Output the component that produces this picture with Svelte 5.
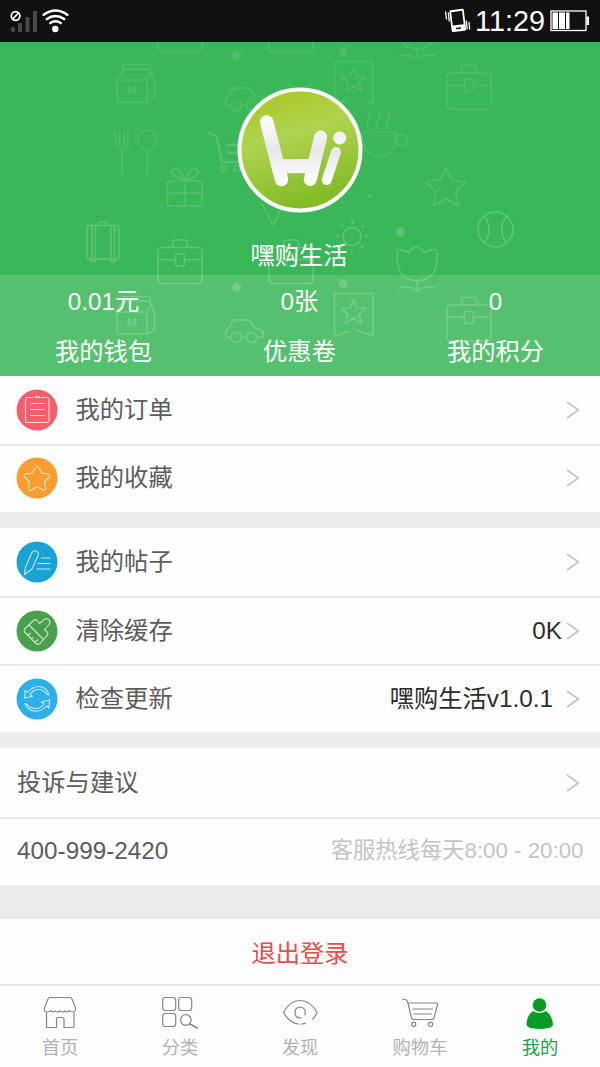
<script>
    const stats = [
        { value: '0.01元', label: '我的钱包' },
        { value: '0张', label: '优惠卷' },
        { value: '0', label: '我的积分' }
    ];

    const groups = [
        [
            { icon: 'order', label: '我的订单', color: '#f3606b' },
            { icon: 'star', label: '我的收藏', color: '#fb9d2f' }
        ],
        [
            { icon: 'post', label: '我的帖子', color: '#17a3d3' },
            { icon: 'brush', label: '清除缓存', color: '#4a9f4d', value: '0K', tight: true },
            { icon: 'refresh', label: '检查更新', color: '#2db0e9', value: '嘿购生活v1.0.1' }
        ]
    ];

    const tabs = [
        { icon: 'home', label: '首页' },
        { icon: 'category', label: '分类' },
        { icon: 'discover', label: '发现' },
        { icon: 'cart', label: '购物车' },
        { icon: 'me', label: '我的' }
    ];

    let activeTab = $state('me');
</script>

{#snippet arrow()}
    <svg class="arrow" viewBox="0 0 14 18" width="14" height="18">
        <path d="M1 1 L12.4 9 L1 17" />
    </svg>
{/snippet}

<div class="page">
    <div class="status-bar">
        <svg width="60" height="26" viewBox="10 8 60 26">
            <g fill="#4a4a4a">
                <rect x="11" y="27" width="4" height="5" rx="1.5" />
                <rect x="18" y="23" width="4" height="9" rx="1" />
                <rect x="25.500" y="17" width="4" height="15" rx="1" />
                <rect x="33" y="11" width="4" height="21" rx="1" />
            </g>
            <g fill="none" stroke="#fff" stroke-width="1.700">
                <circle cx="15.600" cy="16" r="4.300" />
                <path d="M12.600 19 L18.600 13" />
            </g>
            <g fill="none" stroke="#fff" stroke-width="2.500" stroke-linecap="round">
                <path d="M43.700 14.700 Q55.500 6.200 67.300 14.700" />
                <path d="M46.800 19.100 Q55.500 12.900 64.200 19.100" />
                <path d="M50.300 23 Q55.500 19.700 60.700 23" />
            </g>
            <circle cx="55.300" cy="29" r="3.200" fill="#fff" />
        </svg>
        <div class="status-right">
            <svg width="28" height="26" viewBox="441 8 28 26">
                <g transform="rotate(-7 455.500 20.500)">
                    <path
                        fill="#fff"
                        fill-rule="evenodd"
                        d="M450 9.500 h11.500 q1.500 0 1.500 1.500 v19 q0 1.500 -1.500 1.500 h-11.500 q-1.500 0 -1.500 -1.500 v-19 q0 -1.500 1.500 -1.500z M450.200 11.500 v13.500 h11 v-13.500z M453 27.500 v1.500 h5 v-1.500z"
                    />
                </g>
                <g stroke="#fff" stroke-width="1.300">
                    <path d="M443.500 11.500 l1 8 M446.300 12.500 l1 9 M464.300 20.500 l.9 9 M467 22 l.7 7.500" />
                </g>
            </svg>
            <span class="time">11:29</span>
            <svg width="40" height="24" viewBox="550 9 40 24">
                <rect x="551" y="11" width="35" height="19.500" fill="none" stroke="#fff" stroke-width="1.300" />
                <rect x="586.500" y="16.500" width="2.500" height="8.500" fill="#fff" />
                <path fill="#fff" d="M552.500 12.500h5.500v16.500h-5.500z M559 12.500h6v16.500h-6z M566 12.500h3.500v16.500h-3.500z" />
            </svg>
        </div>
    </div>

    <div class="header">
        <svg class="pattern" viewBox="0 42 600 333.500" width="600" height="333.500">
            <defs>
                <g id="briefcase">
                    <rect x="1" y="8.500" width="44" height="36" rx="3.500" />
                    <path d="M15.500 8.500 V4 q0-3 3-3 h9 q3 0 3 3 v4.500 M1 20.500 H18.500 M27.500 20.500 H45" />
                    <rect x="18.500" y="15" width="9" height="12" rx="1.500" />
                </g>
                <g id="upper-row">
                    <path d="M116.500 80 L123 69 H150 L154.500 81 V98 L147 102 H117.500 Z M116.500 80 H147 V102 M147 80 L151 72 M123 69 V64.500 H150 V69" />
                    <text x="132" y="95" class="milk">M</text>
                    <path d="M230 105 H226 Q225 96 229 96 L233 88 H249 L255 96 L262 98 Q264 99 263 105 H258 M241 105 H245" />
                    <circle cx="236" cy="105.500" r="5.200" />
                    <circle cx="251.500" cy="105.500" r="5.200" />
                    <path d="M350 99 L334.500 104 V61.500 H373 V104 L356 98" />
                    <path d="M353.500 67.500 L357 76 L366 76.500 L359 82 L361.500 91 L353.500 86 L345.500 91 L348 82 L341 76.500 L350 76 Z" />
                    <use href="#briefcase" x="446" y="64.500" />
                </g>
                <g id="lower-row">
                    <use href="#briefcase" x="157" y="239" />
                    <use href="#briefcase" x="268" y="239" />
                    <path d="M397.500 250.500 Q405 249 409 253 Q416 240 424 253 Q430 248 436.500 250.500 Q440 280 417 281 Q394 280 397.500 250.500 Z M417 281 V291 M398 288 Q409 285 417 291 Q425 285 436 288" />
                    <circle cx="236.500" cy="287" r="4.500" class="dot" />
                    <circle cx="343" cy="283.500" r="4.200" class="dot" />
                </g>
            </defs>
            <g opacity=".1">
                <use href="#lower-row" y="-232" />
                <use href="#upper-row" />
                <!-- coffee -->
                <path d="M362 132.500 H396.500 Q396 157 379 157 Q363 157 362 132.500" />
                <circle cx="401.500" cy="140.500" r="5.800" />
                <path d="M367 112.500 q5 4 1 8 t2 9 M377 112.500 q5 4 1 8 t2 9 M387 112.500 q5 4 1 8 t2 9" />
                <!-- fork and spoon -->
                <path d="M115.500 130 V145 Q115.500 149.500 122 149.500 Q128 149.500 128 145 V130 M119.500 130 V146 M124 130 V146 M122 150 V175 M147 150 V175" />
                <ellipse cx="147" cy="140" rx="9" ry="10" />
            </g>
            <g opacity=".14">
                <!-- shopping cart -->
                <path d="M208 133 L216.500 136 L222 162 H242 M226 145 H242 M227 153 H242" stroke-width="2.500" />
                <circle cx="224" cy="168.500" r="3" />
                <circle cx="237" cy="168.500" r="3" />
                <!-- gift -->
                <rect x="167.500" y="181" width="34.500" height="25" rx="2" />
                <path d="M185 180 V206 M167.500 193 H202 M185 180 Q170 176 172 170 Q177 164 185 180 Q193 164 198 170 Q199 177 185 180" />
                <path d="M446 168 L451.500 180 L465.500 182 L455.500 191.500 L458.500 205.500 L446 199 L433.500 205.500 L436 191.500 L426 182 L440 180 Z" />
                <circle cx="370" cy="196.500" r="2" class="dot" />
                <path d="M262 204 L273 225 L282 207" />
            </g>
            <g opacity=".18">
                <use href="#lower-row" />
                <!-- suitcase -->
                <rect x="87" y="225.500" width="32" height="33.500" rx="2" />
                <path d="M92 226 V259 M95.500 226 V259 M111 226 V259 M114.500 226 V259 M98 225 Q98 222 103 222 Q108 222 108 225 M91 259 v2.500 h4 v-2.500 M111 259 v2.500 h4 v-2.500" />
                <!-- sun -->
                <circle cx="352" cy="236.500" r="9" />
                <circle cx="352" cy="236.500" r="14.500" stroke-width="3" stroke-linecap="round" stroke-dasharray="0 11.390" />
                <circle cx="400.500" cy="232" r="4.500" class="dot" />
                <!-- tennis ball -->
                <circle cx="495.500" cy="229.500" r="17.500" />
                <path d="M484 216 Q494 229 484 243 M507 216 Q496 229 507 243" />
                <use href="#upper-row" y="232" />
            </g>
        </svg>

        <div class="profile">
            <svg class="avatar" viewBox="0 0 126 126" width="126" height="126">
                <defs>
                    <linearGradient id="lime" x1="0" y1="0" x2=".3" y2="1">
                        <stop offset="0" stop-color="#a9c51b" />
                        <stop offset=".45" stop-color="#b0d350" />
                        <stop offset="1" stop-color="#85bb27" />
                    </linearGradient>
                    <linearGradient id="silver" gradientUnits="userSpaceOnUse" x1="0" y1="30" x2="0" y2="98">
                        <stop offset="0" stop-color="#fff" />
                        <stop offset=".5" stop-color="#e8e8ec" />
                        <stop offset="1" stop-color="#fff" />
                    </linearGradient>
                </defs>
                <circle cx="63" cy="63" r="60.500" fill="url(#lime)" stroke="#fff" stroke-width="4" />
                <g fill="none" stroke="url(#silver)" stroke-linecap="round">
                    <path d="M44 79.200 L75 79" stroke-width="14" stroke-linecap="butt" />
                    <path d="M29.700 35 L44.500 92.500" stroke-width="13.500" />
                    <path d="M83.700 50 L73.200 92.500" stroke-width="13" />
                    <path d="M99 65 L89.700 93" stroke-width="10" />
                </g>
                <circle cx="102.700" cy="51" r="6.500" fill="#f3f3f5" />
            </svg>
            <div class="name">嘿购生活</div>
        </div>

        <div class="stats">
            {#each stats as stat}
                <div class="stat">
                    <span>{stat.value}</span>
                    <span>{stat.label}</span>
                </div>
            {/each}
        </div>
    </div>

    {#each groups as group}
        <div class="group">
            {#each group as item}
                <div class="row">
                    <svg class="row-icon" viewBox="0 0 42 42" width="42" height="42">
                        <circle cx="21" cy="21" r="20.500" fill={item.color} stroke="none" />
                        {#if item.icon === 'order'}
                            <path d="M17 8.500 H11.500 Q9.500 8.500 9.500 10.500 V31.500 Q9.500 33.500 11.500 33.500 H31 Q33 33.500 33 31.500 V10.500 Q33 8.500 31 8.500 H25.500 M19 8.500 L20 7.500 H23 L24 8.500 Z M14 14.500 H28.500 M14 20.500 H28.500 M14 26.500 H28.500" />
                        {:else if item.icon === 'star'}
                            <path d="M19.500 10.500 Q21 7 22.500 10.500 L25.500 16 L32 17 Q35 18 33 20.500 L28.500 25 L29.800 31.500 Q29.500 34 27 33 L21 30 L15 33 Q12.500 34 12.300 31.500 L13.500 25 L9 20.500 Q7 18 10 17 L16.500 16 Z" />
                        {:else if item.icon === 'post'}
                            <path d="M8.500 33.500 L9.500 26 L15.500 12.500 Q17 9 20 10 Q23.500 11.500 22 14.500 L16 28 Z M25 17 H34.500 M21.500 22.500 H34.500 M20.500 28 H34.500" />
                        {:else if item.icon === 'brush'}
                            <path d="M8.500 19 L18 10 Q19.500 9 21 10.500 L23.500 13.500 L29 8.800 Q31 8 33 10.200 Q34.800 12 33.500 14 L28.500 19.500 L31.500 22.500 Q32.500 24 31 25.500 L23.500 34 Q21.500 35 20 33.500 L9 22.500 Q7.500 21 8.500 19 Z M13 15 L27 29 M12 25.500 L14.500 23 M15.500 29 L17 27.500 M19 32.500 L22 29.500" />
                        {:else}
                            <path d="M8.500 20 L9 12.500 L11.500 14.500 Q17 8 24 8.500 Q31 9.500 33 17 L30.500 16 Q28 11.500 22 11.500 Q17 11.500 14 16.500 L16.500 18.500 Z M33.500 22 L33 30 L30.500 28 Q25 34 18 33 Q11.500 32 9 25.500 L11.500 26.500 Q14 30.500 20 30.500 Q25 30.500 28 26 L25.500 24 Z" />
                        {/if}
                    </svg>
                    <span class="label">{item.label}</span>
                    {#if item.value}
                        <span class="value" class:tight={item.tight}>{item.value}</span>
                    {/if}
                    {@render arrow()}
                </div>
            {/each}
        </div>
    {/each}

    <div class="group">
        <div class="row">
            <span class="label plain">投诉与建议</span>
            {@render arrow()}
        </div>
        <div class="row">
            <span class="label plain">400-999-2420</span>
            <span class="hours">客服热线每天8:00 - 20:00</span>
        </div>
    </div>

    <button class="logout">退出登录</button>

    <div class="tab-bar">
        {#each tabs as tab}
            <button class="tab" class:active={tab.icon === activeTab} onclick={() => (activeTab = tab.icon)}>
                <svg viewBox="0 0 40 36" width="40" height="36">
                    {#if tab.icon === 'home'}
                        <path d="M9.500 3.500 H30 Q31.500 3.500 32 5 L35.500 14 Q36 18 32.500 18 Q30.500 18 29.500 16.500 Q28 19 25 17 Q23 19 20 17 Q18 19 15 17 Q12 19 10.500 16.500 Q9.500 18 7 18 Q4 18 4.500 14 L8 5 Q8.500 3.500 9.500 3.500 Z M6.500 19 V32.500 Q6.500 33.500 7.500 33.500 H16.500 V25 Q16.500 23.500 18 23.500 H22.500 Q24 23.500 24 25 V33.500 H33 Q34 33.500 34 32.500 V19" />
                    {:else if tab.icon === 'category'}
                        <rect x="2.700" y="3.500" width="13" height="13" rx="2.500" />
                        <rect x="18.700" y="3.500" width="13" height="13" rx="2.500" />
                        <rect x="2.700" y="19.500" width="13" height="13" rx="2.500" />
                        <circle cx="25.800" cy="26" r="5.300" />
                        <path d="M29.800 30 L37.500 34" stroke-width="1.600" />
                    {:else if tab.icon === 'discover'}
                        <path d="M18.500 30 Q10 29.500 3.500 18.500 Q10 6.500 20 6.500 Q30.500 6.500 37 18.500 Q35 23 32.500 25" />
                        <path d="M25 21 Q26.500 13.500 20 13 Q15 13.500 15 18.500 Q15 24 21 24 M21 30 Q23 30 25.500 29.300" />
                    {:else if tab.icon === 'cart'}
                        <path d="M2.500 5 L6.500 6 L8 9 H36 Q38 9 37.500 11 L34 24 Q33.500 25.500 31.500 25.500 H14 Q12 25.500 11.500 24 L8 9 M13 15 H32.500 M14 20 H31.500" />
                        <circle cx="13.700" cy="30.300" r="2.100" />
                        <circle cx="30.500" cy="30.300" r="2.100" />
                    {:else}
                        <circle cx="19.500" cy="11" r="6.800" />
                        <path d="M13 17 Q19.500 21 26 17 Q32 21 33 30 Q33 34.800 19.500 35 Q6 34.800 6.500 30 Q7 21 13 17 Z" />
                    {/if}
                </svg>
                <span>{tab.label}</span>
            </button>
        {/each}
    </div>
</div>

<style>
    :global(body) {
        margin: 0;
        background: #ebebeb;
    }

    .page {
        width: 600px;
        height: 1067px;
        display: flex;
        flex-direction: column;
        overflow: hidden;
        background: #ebebeb;
        font-family: 'Liberation Sans', 'Noto Sans CJK SC', sans-serif;
        font-size: 24.3px;
        color: #5c5c5c;
    }

    .status-bar {
        height: 42px;
        flex: none;
        box-sizing: border-box;
        display: flex;
        align-items: center;
        justify-content: space-between;
        padding: 0 10px;
        background: #111;
    }

    .status-right {
        display: flex;
        align-items: center;
        color: #fff;
    }

    .time {
        font-size: 28.8px;
        line-height: 42px;
        margin: 0 5px 0 4px;
    }

    .header {
        height: 333.5px;
        flex: none;
        position: relative;
        display: flex;
        flex-direction: column;
        justify-content: space-between;
        background: #3ab758;
        color: #fff;
    }

    .pattern {
        position: absolute;
        top: 0;
        left: 0;
        fill: none;
        stroke: #fff;
        stroke-width: 1.6;
        stroke-linejoin: round;
    }

    .dot {
        fill: #fff;
        stroke: none;
    }

    .milk {
        fill: #fff;
        stroke: none;
        font-size: 12px;
        font-weight: bold;
        text-anchor: middle;
    }

    .profile {
        position: relative;
        display: flex;
        flex-direction: column;
        align-items: center;
        padding-top: 45px;
    }

    .name {
        margin: 25px 2px 0 0;
        line-height: 36px;
    }

    .stats {
        position: relative;
        height: 100.5px;
        display: grid;
        grid-template-columns: 207px 185px 207px;
        background: rgba(255, 255, 255, 0.14);
    }

    .stat {
        display: flex;
        flex-direction: column;
        align-items: center;
        gap: 14px;
        padding-top: 9px;
        line-height: 36px;
    }

    .group {
        margin-bottom: 16px;
        background: #fefefe;
    }

    .row {
        height: 68.2px;
        box-sizing: border-box;
        display: flex;
        align-items: center;
        padding: 1px 20px 0 16px;
        line-height: 36px;
    }

    .row + .row {
        box-shadow: inset 0 2px #e9e9e9;
    }

    .row-icon {
        flex: none;
        fill: none;
        stroke: rgba(255, 255, 255, 0.75);
        stroke-width: 1.1;
        stroke-linejoin: round;
    }

    .label {
        flex: 1;
        margin-left: 17.5px;
    }

    .label.plain {
        margin-left: 1px;
    }

    .value {
        color: #2c2c2c;
        margin-right: 13px;
    }

    .value.tight {
        margin-right: 4px;
    }

    .arrow {
        flex: none;
        fill: none;
        stroke: #c6c6c6;
        stroke-width: 1.9;
    }

    .hours {
        font-size: 22.3px;
        color: #c4c4c4;
        margin-right: -3.5px;
    }

    .logout {
        height: 65px;
        flex: none;
        margin-top: 18.3px;
        border: none;
        padding: 0 0 1px;
        background: #fefefe;
        color: #ea4b4b;
        font: inherit;
    }

    .tab-bar {
        flex: 1;
        display: grid;
        grid-template-columns: repeat(5, 1fr);
        border-top: 2px solid #e6e6e6;
        background: #fdfdfd;
    }

    .tab {
        display: flex;
        flex-direction: column;
        align-items: center;
        border: none;
        padding: 8px 0 0;
        background: none;
        font-family: inherit;
        font-size: 18.3px;
        line-height: 27px;
        color: #b2b2b2;
    }

    .tab svg {
        fill: none;
        stroke: #868686;
        stroke-width: 1.2;
        stroke-linejoin: round;
        stroke-linecap: round;
    }

    .tab span {
        margin-top: 4px;
    }

    .tab.active {
        color: #23a047;
    }

    .tab.active svg {
        fill: #089c27;
        stroke: none;
    }
</style>
